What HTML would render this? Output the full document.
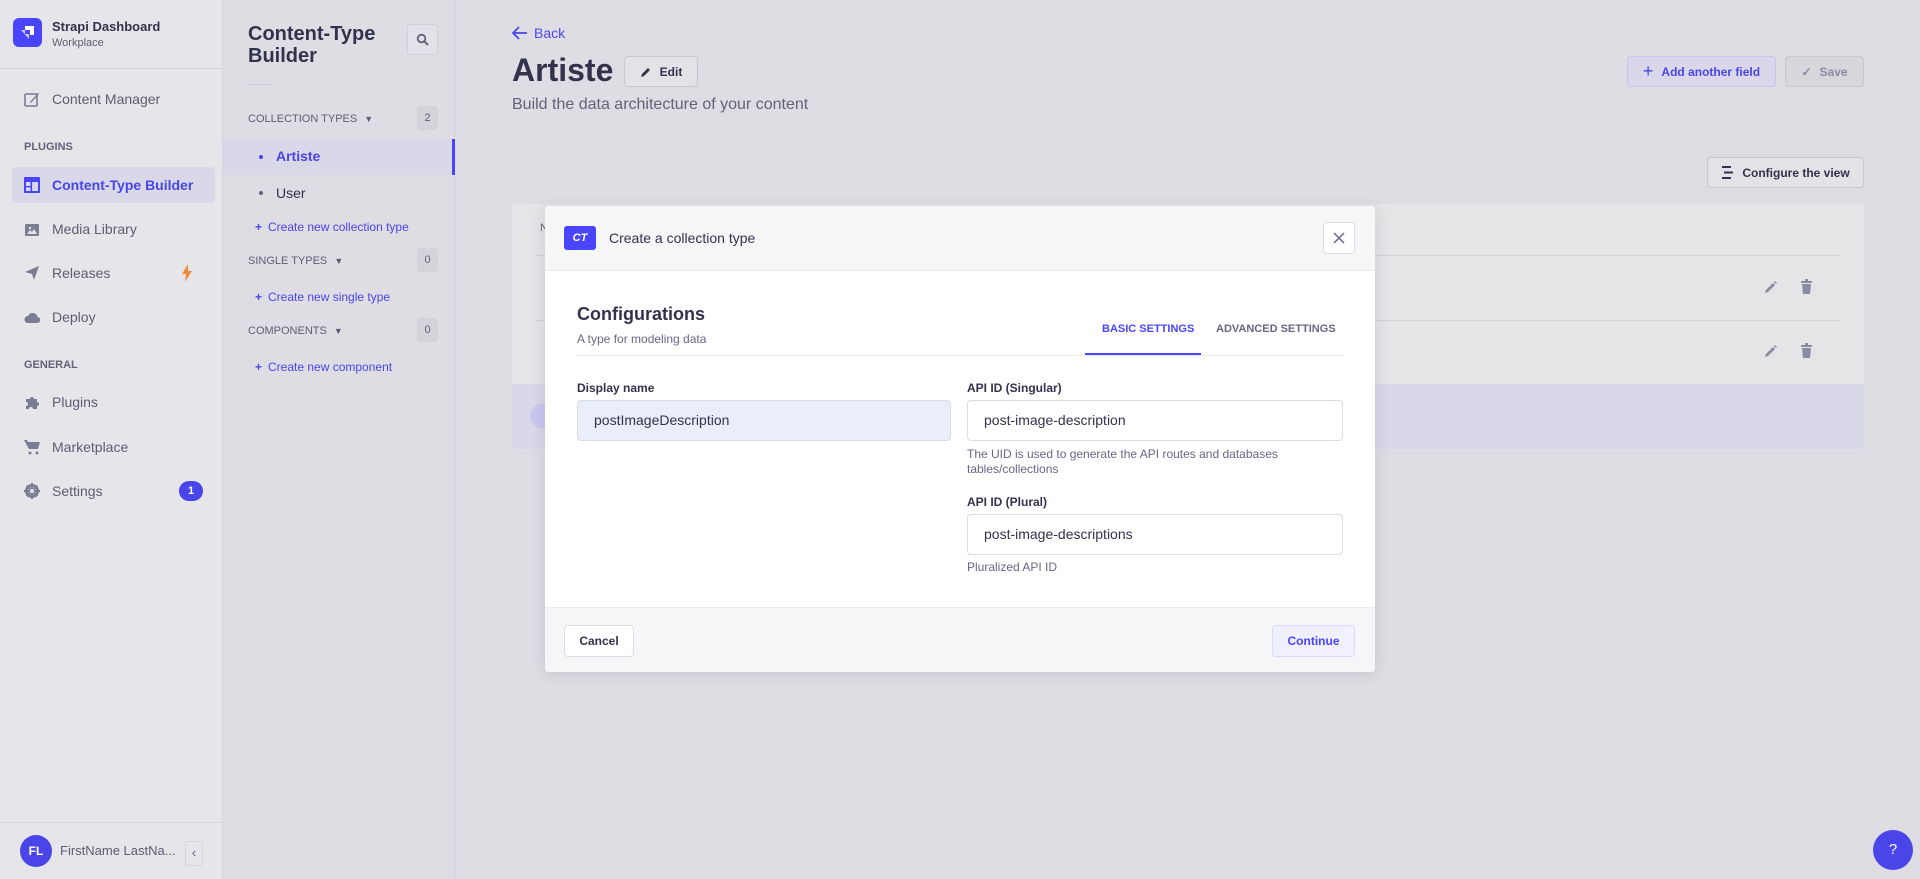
<!DOCTYPE html>
<html><head><meta charset="utf-8">
<style>
*{box-sizing:border-box;margin:0;padding:0}
body{width:1920px;height:879px;overflow:hidden;font-family:"Liberation Sans",sans-serif;background:#dedde3;position:relative;color:#32324d}
.abs{position:absolute}
.s1{left:0;top:0;width:223px;height:879px;background:#e6e6ea;border-right:1px solid #d3d3da}
.s2{left:223px;top:0;width:232px;height:879px;background:#dedde4;border-right:1px solid #d0d0d8}
.nav{position:absolute;left:52px;font-size:14px;color:#5d5c72;transform:translateY(-50%)}
.ico{position:absolute;left:24px;width:16px;height:16px;transform:translateY(-50%)}
.sec{position:absolute;left:24px;font-size:11px;font-weight:bold;color:#62627a;transform:translateY(-50%)}
.s2t{position:absolute;left:248px;font-size:11px;color:#5e5d74;transform:translateY(-50%)}
.badge{position:absolute;left:417px;width:21px;height:24px;background:#d4d3da;border-radius:4px;font-size:11px;color:#62627a;text-align:center;line-height:24px}
.lnk{position:absolute;left:255px;font-size:12px;color:#4945e8;transform:translateY(-50%)}
.btn{position:absolute;border:1px solid #c6c6ce;border-radius:4px;background:#e3e3e7;font-size:12px;font-weight:bold;display:flex;align-items:center;justify-content:center;gap:8px}
.lbl{position:absolute;font-size:12px;font-weight:bold;color:#32324d}
.inp{position:absolute;height:41px;border:1px solid #dcdce4;border-radius:4px;background:#fff;font-size:14px;color:#32324d;padding-left:16px;line-height:39px}
.help{position:absolute;font-size:12px;color:#666687;line-height:15px}
</style></head><body>

<div class="abs s1"></div>
<div class="abs" style="left:0;top:68px;width:223px;height:1px;background:#d3d3da"></div>
<div class="abs" style="left:13px;top:18px;width:29px;height:29px;background:#4945ff;border-radius:6px"></div>
<svg class="abs" style="left:19px;top:24px" width="17" height="17" viewBox="0 0 17 17"><path d="M6 2h9v9h-4V6H6z" fill="#fff"/><path d="M2 6h4v4h4v5z" fill="#fff" opacity=".7"/></svg>
<div class="abs" style="left:52px;top:19px;font-size:13px;font-weight:bold;color:#32324d">Strapi Dashboard</div>
<div class="abs" style="left:52px;top:37px;font-size:11px;color:#5d5c72">Workplace</div>

<svg class="ico" style="top:99px" viewBox="0 0 16 16"><rect x="1" y="3" width="12" height="12" rx="1" fill="none" stroke="#7b7b93" stroke-width="1.6"/><path d="M6 11l8-9 1 1-8 9z" fill="#7b7b93"/></svg>
<div class="nav" style="top:99px">Content Manager</div>
<div class="sec" style="top:147px">PLUGINS</div>
<div class="abs" style="left:12px;top:167px;width:203px;height:36px;background:#d9d8e8;border-radius:4px"></div>
<svg class="ico" style="top:185px" viewBox="0 0 16 16"><rect x="0" y="0" width="16" height="16" rx="1" fill="#4945ff"/><rect x="2" y="5" width="12" height="9" fill="#d9d8e8"/><rect x="6.5" y="5" width="1.6" height="9" fill="#4945ff"/><rect x="2" y="9" width="4.5" height="1.4" fill="#4945ff"/></svg>
<div class="nav" style="top:185px;color:#4945e8;font-weight:bold">Content-Type Builder</div>
<svg class="ico" style="top:229px" viewBox="0 0 16 16"><rect x="1" y="3" width="14" height="12" rx="1" fill="#7b7b93"/><path d="M3 13l3-4 2 2 2-3 3 5z" fill="#e6e6ea"/><circle cx="6" cy="7" r="1.2" fill="#e6e6ea"/></svg>
<div class="nav" style="top:229px">Media Library</div>
<svg class="ico" style="top:273px" viewBox="0 0 16 16"><path d="M1 7L15 1 10 15 8 9z" fill="#7b7b93"/></svg>
<div class="nav" style="top:273px">Releases</div>
<svg class="abs" style="left:181px;top:264px" width="12" height="18" viewBox="0 0 12 18"><path d="M7 0L1 10h4l-1 8 7-11H7z" fill="#ee8b3a"/></svg>
<svg class="ico" style="top:317px" viewBox="0 0 16 16"><path d="M4 14a3.5 3.5 0 010-7 5 5 0 019.5 1A3 3 0 0113 14z" fill="#7b7b93"/></svg>
<div class="nav" style="top:317px">Deploy</div>
<div class="sec" style="top:365px">GENERAL</div>
<svg class="ico" style="top:402px" viewBox="0 0 16 16"><path d="M2 5h4a2 2 0 114 0h3v3a2 2 0 110 4v3H9a2 2 0 10-4 0H2v-3a2 2 0 100-4z" fill="#7b7b93"/></svg>
<div class="nav" style="top:402px">Plugins</div>
<svg class="ico" style="top:447px" viewBox="0 0 16 16"><path d="M0 1h3l1 2h12l-2 7H5z" fill="#7b7b93"/><circle cx="6" cy="14" r="1.5" fill="#7b7b93"/><circle cx="13" cy="14" r="1.5" fill="#7b7b93"/></svg>
<div class="nav" style="top:447px">Marketplace</div>
<svg class="ico" style="top:491px" viewBox="0 0 16 16"><circle cx="8" cy="8" r="5.5" fill="none" stroke="#7b7b93" stroke-width="3"/><path d="M7 0h2v16H7zM0 7h16v2H0z" fill="#7b7b93"/><path d="M2 3.4L3.4 2 14 12.6 12.6 14zM12.6 2L14 3.4 3.4 14 2 12.6z" fill="#7b7b93"/><circle cx="8" cy="8" r="2" fill="#e6e6ea"/></svg>
<div class="nav" style="top:491px">Settings</div>
<div class="abs" style="left:179px;top:481px;width:24px;height:20px;border-radius:10px;background:#4945e8;color:#fff;font-size:11px;font-weight:bold;text-align:center;line-height:20px">1</div>

<div class="abs" style="left:0;top:822px;width:223px;height:1px;background:#d3d3da"></div>
<div class="abs" style="left:20px;top:835px;width:32px;height:32px;border-radius:50%;background:#4945e8;color:#fff;font-size:12px;font-weight:bold;text-align:center;line-height:32px">FL</div>
<div class="abs" style="left:60px;top:843px;font-size:13px;color:#5d5c72">FirstName LastNa...</div>
<div class="abs" style="left:185px;top:841px;width:18px;height:25px;border:1px solid #d3d3da;border-radius:3px;font-size:13px;color:#5d5c72;text-align:center;line-height:22px">‹</div>

<div class="abs s2"></div>
<div class="abs" style="left:248px;top:23px;font-size:20px;font-weight:bold;color:#32324d;line-height:22px">Content-Type<br>Builder</div>
<div class="abs" style="left:407px;top:24px;width:31px;height:31px;border:1px solid #cfcfd7;border-radius:4px;background:#e3e2e8"></div>
<svg class="abs" style="left:416px;top:33px" width="13" height="13" viewBox="0 0 13 13"><circle cx="5.5" cy="5.5" r="3.8" fill="none" stroke="#62627a" stroke-width="1.8"/><path d="M8.3 8.3L12 12" stroke="#62627a" stroke-width="2"/></svg>
<div class="abs" style="left:248px;top:84px;width:24px;height:1px;background:#cfcfd7"></div>
<div class="s2t" style="top:119px">COLLECTION TYPES <span style="font-size:9px;margin-left:4px">▼</span></div>
<div class="badge" style="top:106px">2</div>
<div class="abs" style="left:223px;top:139px;width:232px;height:36px;background:#d9d8e8;border-right:3px solid #4945ff"></div>
<div class="abs" style="left:259px;top:155px;width:4px;height:4px;border-radius:50%;background:#4945e8"></div>
<div class="abs" style="left:276px;top:148px;font-size:14px;font-weight:bold;color:#4945e8">Artiste</div>
<div class="abs" style="left:259px;top:191px;width:4px;height:4px;border-radius:50%;background:#62627a"></div>
<div class="abs" style="left:276px;top:185px;font-size:14px;color:#32324d">User</div>
<div class="lnk" style="top:227px"><b style="margin-right:6px">+</b>Create new collection type</div>
<div class="s2t" style="top:261px">SINGLE TYPES <span style="font-size:9px;margin-left:4px">▼</span></div>
<div class="badge" style="top:248px">0</div>
<div class="lnk" style="top:297px"><b style="margin-right:6px">+</b>Create new single type</div>
<div class="s2t" style="top:331px">COMPONENTS <span style="font-size:9px;margin-left:4px">▼</span></div>
<div class="badge" style="top:318px">0</div>
<div class="lnk" style="top:367px"><b style="margin-right:6px">+</b>Create new component</div>

<!-- main -->
<div class="abs" style="left:512px;top:25px;font-size:14px;color:#4945e8">
<svg width="16" height="14" viewBox="0 0 16 14" style="vertical-align:-2px;margin-right:6px"><path d="M15 7H2M7 1L1 7l6 6" fill="none" stroke="#4945e8" stroke-width="1.8"/></svg>Back</div>
<div class="abs" style="left:512px;top:52px;font-size:32px;font-weight:bold;color:#32324d">Artiste</div>
<div class="btn" style="left:624px;top:56px;width:74px;height:31px;color:#32324d"><svg width="12" height="12" viewBox="0 0 12 12"><path d="M1 11l1-3 6-6 2 2-6 6z" fill="#32324d"/></svg>Edit</div>
<div class="abs" style="left:512px;top:96px;font-size:16px;color:#62627a">Build the data architecture of your content</div>
<div class="btn" style="left:1627px;top:56px;width:149px;height:31px;background:#d9d8ea;border-color:#c6c4f2;color:#4945e8"><span style="font-size:18px;font-weight:normal">+</span>Add another field</div>
<div class="btn" style="left:1785px;top:56px;width:79px;height:31px;background:#d6d6db;color:#8a8aa0"><span>✓</span>Save</div>
<div class="btn" style="left:1707px;top:157px;width:157px;height:31px;color:#32324d"><svg width="13" height="13" viewBox="0 0 13 13"><path d="M1 1h9M3 6.5h9M1 12h9" stroke="#32324d" stroke-width="2"/></svg>Configure the view</div>

<div class="abs" style="left:512px;top:204px;width:1352px;height:245px;background:#e5e5e8;border-radius:4px;overflow:hidden">
 <div class="abs" style="left:28px;top:18px;font-size:11px;color:#62627a">N</div>
 <div class="abs" style="left:23px;top:51px;width:1305px;height:1px;background:#d3d3da"></div>
 <div class="abs" style="left:23px;top:116px;width:1305px;height:1px;background:#d3d3da"></div>
 <div class="abs" style="left:0;top:180px;width:1352px;height:65px;background:#d9d8e8"></div>
 <div class="abs" style="left:18px;top:200px;width:24px;height:24px;border-radius:50%;background:#c9c7ee"></div>
</div>
<svg class="abs" style="left:1764px;top:280px" width="14" height="14" viewBox="0 0 14 14"><path d="M1 13l1-3 7-7 2 2-7 7z M10 2l1-1 2 2-1 1z" fill="#8a8aa0"/></svg>
<svg class="abs" style="left:1800px;top:279px" width="13" height="15" viewBox="0 0 13 15"><path d="M1 2h11v2H1zM5 0h3v2H5zM2 5h9l-1 10H3z" fill="#8a8aa0"/></svg>
<svg class="abs" style="left:1764px;top:344px" width="14" height="14" viewBox="0 0 14 14"><path d="M1 13l1-3 7-7 2 2-7 7z M10 2l1-1 2 2-1 1z" fill="#8a8aa0"/></svg>
<svg class="abs" style="left:1800px;top:343px" width="13" height="15" viewBox="0 0 13 15"><path d="M1 2h11v2H1zM5 0h3v2H5zM2 5h9l-1 10H3z" fill="#8a8aa0"/></svg>

<!-- modal -->
<div class="abs" style="left:545px;top:206px;width:830px;height:466px;background:#fff;border-radius:4px;box-shadow:0 2px 15px rgba(33,33,52,.12);overflow:hidden">
 <div class="abs" style="left:0;top:0;width:830px;height:65px;background:#f6f6f9;border-bottom:1px solid #eaeaef"></div>
 <div class="abs" style="left:19px;top:20px;width:32px;height:24px;background:#4945ff;border-radius:3px;color:#fff;font-size:11px;font-weight:bold;font-style:italic;text-align:center;line-height:24px">CT</div>
 <div class="abs" style="left:64px;top:24px;font-size:14px;color:#32324d">Create a collection type</div>
 <div class="abs" style="left:778px;top:16px;width:32px;height:32px;border:1px solid #dcdce4;border-radius:4px;background:#fff"></div>
 <svg class="abs" style="left:788px;top:26px" width="12" height="12" viewBox="0 0 12 12"><path d="M1 1l10 10M11 1L1 11" stroke="#666687" stroke-width="1.5"/></svg>
 <div class="abs" style="left:32px;top:98px;font-size:18px;font-weight:bold;color:#32324d">Configurations</div>
 <div class="abs" style="left:32px;top:126px;font-size:12px;color:#666687">A type for modeling data</div>
 <div class="abs" style="left:557px;top:117px;font-size:11px;font-weight:bold;color:#4945ff">BASIC SETTINGS</div>
 <div class="abs" style="left:671px;top:117px;font-size:11px;font-weight:bold;color:#666687">ADVANCED SETTINGS</div>
 <div class="abs" style="left:32px;top:149px;width:766px;height:1px;background:#eaeaef"></div>
 <div class="abs" style="left:540px;top:147px;width:116px;height:2px;background:#4945ff"></div>
 <div class="lbl" style="left:32px;top:175px">Display name</div>
 <div class="inp" style="left:32px;top:194px;width:374px;background:#eaeefb">postImageDescription</div>
 <div class="lbl" style="left:422px;top:175px">API ID (Singular)</div>
 <div class="inp" style="left:422px;top:194px;width:376px">post-image-description</div>
 <div class="help" style="left:422px;top:241px">The UID is used to generate the API routes and databases<br>tables/collections</div>
 <div class="lbl" style="left:422px;top:289px">API ID (Plural)</div>
 <div class="inp" style="left:422px;top:308px;width:376px">post-image-descriptions</div>
 <div class="help" style="left:422px;top:354px">Pluralized API ID</div>
 <div class="abs" style="left:0;top:401px;width:830px;height:65px;background:#f6f6f9;border-top:1px solid #eaeaef"></div>
 <div class="abs" style="left:19px;top:419px;width:70px;height:32px;border:1px solid #dcdce4;border-radius:4px;background:#fff;font-size:12px;font-weight:bold;text-align:center;line-height:30px;color:#32324d">Cancel</div>
 <div class="abs" style="left:727px;top:419px;width:83px;height:32px;border:1px solid #d9d8ff;border-radius:4px;background:#f0f0ff;font-size:12px;font-weight:bold;text-align:center;line-height:30px;color:#4945ff">Continue</div>
</div>

<div class="abs" style="left:1873px;top:830px;width:40px;height:40px;border-radius:50%;background:#4945e8;color:#fff;font-size:15px;text-align:center;line-height:40px">?</div>
</body></html>
